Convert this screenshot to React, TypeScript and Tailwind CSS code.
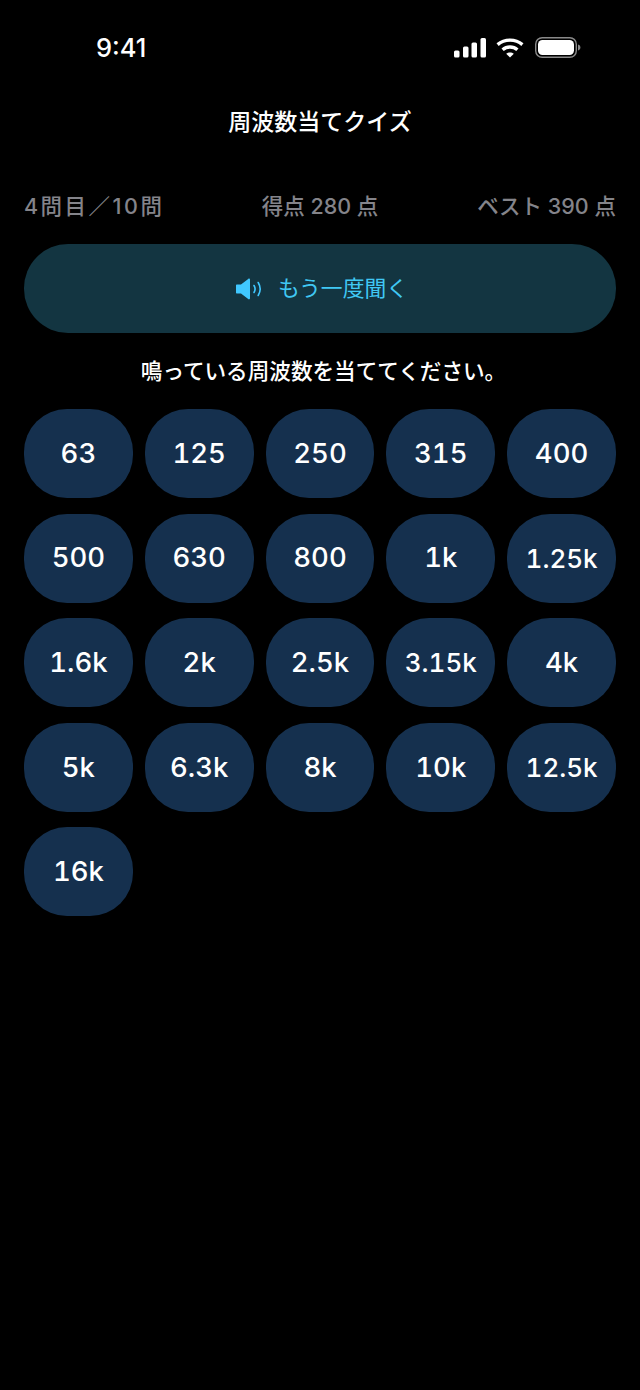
import React from 'react';

const freqs = [
  '63', '125', '250', '315', '400',
  '500', '630', '800', '1k', '1.25k',
  '1.6k', '2k', '2.5k', '3.15k', '4k',
  '5k', '6.3k', '8k', '10k', '12.5k',
  '16k',
];

const fontStack = "font-['Inter','Noto_Sans_CJK_JP',sans-serif]";

const StatusIcons = () => (
  <div className="flex items-center">
    <svg width="33" height="20" viewBox="0 0 33 20" fill="white">
      <rect x="1" y="12.5" width="5.5" height="7" rx="1.5" />
      <rect x="10" y="8.5" width="5.5" height="11" rx="1.5" />
      <rect x="18.5" y="4.5" width="5.5" height="15" rx="1.5" />
      <rect x="27.5" y="0" width="5.5" height="19.5" rx="1.5" />
    </svg>
    <svg width="28" height="20" viewBox="0 0 28 20" fill="none" stroke="white" strokeWidth="3.4" className="ml-[10px]">
      <path d="M1.6 6.6C8.6 0.6 19.4 0.6 26.4 6.6" />
      <path d="M6.6 11.8C10.9 8 17.1 8 21.4 11.8" />
      <path d="M14 19.6L10.2 15.8C12.3 14 15.7 14 17.8 15.8Z" fill="white" stroke="none" />
    </svg>
    <svg width="46" height="21" viewBox="0 0 46 21" fill="none" className="ml-[11px]">
      <rect x="0.7" y="0.7" width="40.6" height="19.6" rx="6.5" stroke="#8a8a8a" strokeWidth="1.4" />
      <rect x="3" y="3" width="36" height="15" rx="4.5" fill="white" />
      <path d="M43 7.5C44.6 7.9 45.4 9.1 45.4 10.5C45.4 11.9 44.6 13.1 43 13.5Z" fill="#8a8a8a" />
    </svg>
  </div>
);

const SpeakerIcon = () => (
  <svg width="26" height="22" viewBox="0 0 26 22" fill="none">
    <path d="M0 7.6C0 7 0.4 6.6 1 6.6H5L12.2 0.9C13 0.3 14 0.7 14 1.7V20.3C14 21.3 13 21.7 12.2 21.1L5 15.4H1C0.4 15.4 0 15 0 14.4Z" fill="#40c8ff" />
    <path d="M18 7.5C19.3 9.6 19.3 12.4 18 14.5" stroke="#40c8ff" strokeWidth="1.6" strokeLinecap="round" />
    <path d="M22.2 4.5C24.6 8.4 24.6 13.6 22.2 17.5" stroke="#40c8ff" strokeWidth="1.6" strokeLinecap="round" />
  </svg>
);

export default function App() {
  return (
    <div className={`w-[640px] h-[1390px] bg-black text-white overflow-hidden ${fontStack}`}>
      {/* Status bar */}
      <div className="h-[96px] flex items-start justify-between pl-[96px] pr-[59px] pt-[34px]">
        <span className="text-[25.5px] leading-[28px] font-medium">9:41</span>
        <div className="pt-[3px]">
          <StatusIcons />
        </div>
      </div>

      <h1 className="text-center text-[23px] leading-[52px] font-medium">周波数当てクイズ</h1>

      {/* Score row */}
      <div className="mt-[38px] px-[24px] grid grid-cols-3 text-[21.5px] leading-[40px] font-medium text-[#84848a]">
        <span className="tracking-[2.5px] whitespace-nowrap">4問目／10問</span>
        <span className="text-center whitespace-nowrap">得点 280 点</span>
        <span className="text-right whitespace-nowrap">ベスト 390 点</span>
      </div>

      <div className="px-[24px]">
        <button className="mt-[18px] w-full h-[89px] rounded-[44px] bg-[#133541] flex items-center justify-center gap-[16px] pl-[4px] text-[#40c8f4] text-[21.8px] font-normal">
          <SpeakerIcon />
          <span>もう一度聞く</span>
        </button>

        <p className="mt-[20px] pl-[7px] text-center text-[21.6px] leading-[36px] font-medium">
          鳴っている周波数を当ててください。
        </p>

        <div className="mt-[20px] grid grid-cols-5 gap-x-[12px] gap-y-[15.6px]">
          {freqs.map((f) => (
            <button
              key={f}
              className={`h-[89px] rounded-[43px] bg-[#15304e] flex items-center justify-center font-medium tabular-nums ${
                f.length === 5 ? 'text-[26px]' : 'text-[27.5px]'
              }`}
            >
              {f}
            </button>
          ))}
        </div>
      </div>
    </div>
  );
}
